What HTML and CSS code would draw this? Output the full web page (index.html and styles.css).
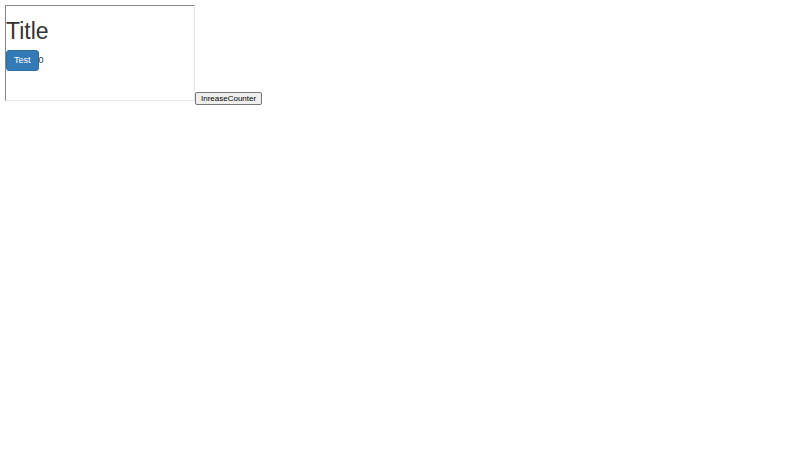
FILE: index.html
```
<!doctype html>
<html lang="en">
<head>
<meta charset="utf-8">
<title>Title</title>
<meta name="viewport" content="width=device-width">
<link rel="stylesheet" href="styles.css">
</head>
<body>
<div class="row">
<div class="frame">
<h1>Title</h1>
<button type="button" class="btn" id="test">Test</button><span id="count">0</span>
</div>
<button type="button" class="inc" id="inc">InreaseCounter</button>
</div>
<script>
var n = 0;
document.getElementById("inc").onclick = function() {
  document.getElementById("count").textContent = ++n;
};
</script>
</body>
</html>
```
FILE: styles.css
```
body {margin:5px; background:#fff; color:#333; font:9px/13px "Liberation Sans",Arial,sans-serif}
.row {display:flex; align-items:flex-end}
.frame {box-sizing:border-box; width:190px; min-height:96px; margin-bottom:4px; border:1px solid; border-color:#888 #e4e4e4 #e4e4e4 #888}
h1 {margin:13px 0 6px; font-size:23px; font-weight:normal; line-height:25px}
.btn {padding:3px 7px; border:1px solid #2e6da4; border-radius:3px; background:#337ab7; color:#fff; font:inherit; vertical-align:middle}
.inc {padding:0 5px; border:1px solid #767676; border-radius:2px; background:#efefef; color:#000; font:8px/11px "Liberation Sans",Arial,sans-serif}
```
